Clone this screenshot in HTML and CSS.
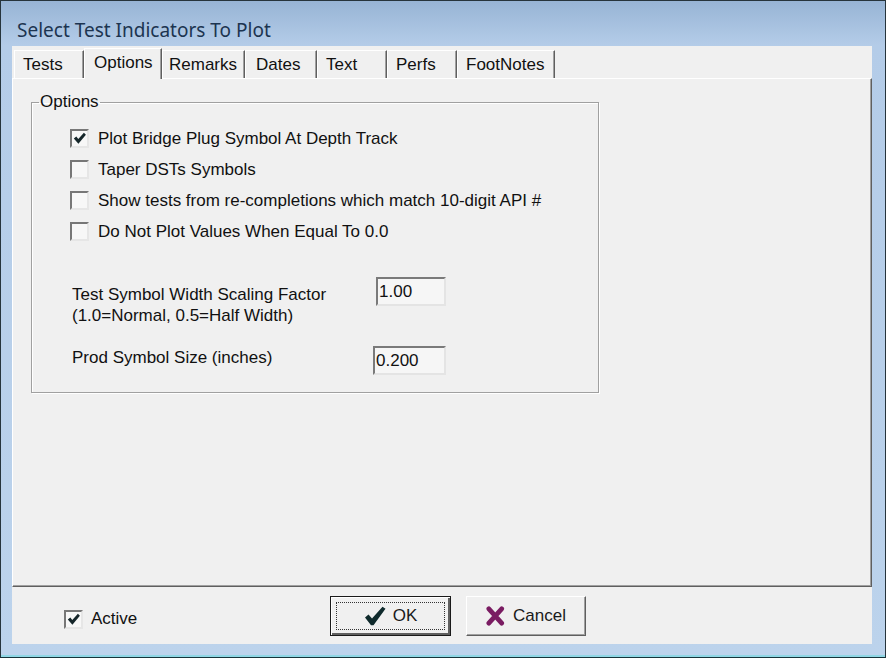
FILE: index.html
```html
<!DOCTYPE html>
<html lang="en">
<head>
    <meta charset="UTF-8">
    <title>Select Test Indicators To Plot</title>
    <link rel="stylesheet" href="styles.css">
</head>
<body>
    <div class="window">
        <div class="titlebar">Select Test Indicators To Plot</div>

        <div class="client">
            <!-- tab strip -->
            <div class="tabs">
                <div class="tab">Tests</div>
                <div class="tab active">Options</div>
                <div class="tab">Remarks</div>
                <div class="tab">Dates</div>
                <div class="tab">Text</div>
                <div class="tab">Perfs</div>
                <div class="tab">FootNotes</div>
            </div>

            <div class="panel">
                <fieldset class="group">
                    <legend>Options</legend>
                    <div class="group-body">
                        <div class="check-row">
                            <span class="box checked">
                                <svg viewBox="0 0 15 15" width="15" height="15"><path d="M1.8 7.6 L4.3 5.4 L6.3 8.1 L11.9 1.8 L13.9 3.7 L6.4 12.8 Z" fill="#15262a"/></svg>
                            </span>
                            Plot Bridge Plug Symbol At Depth Track
                        </div>
                        <div class="check-row"><span class="box"></span>Taper DSTs Symbols</div>
                        <div class="check-row"><span class="box"></span>Show tests from re-completions which match 10-digit API #</div>
                        <div class="check-row"><span class="box"></span>Do Not Plot Values When Equal To 0.0</div>

                        <div class="field-row first">
                            <div class="field-label">Test Symbol Width Scaling Factor<br>(1.0=Normal, 0.5=Half Width)</div>
                            <div class="textbox">1.00</div>
                        </div>
                        <div class="field-row second">
                            <div class="field-label">Prod Symbol Size (inches)</div>
                            <div class="textbox">0.200</div>
                        </div>
                    </div>
                </fieldset>
            </div>

            <!-- bottom bar -->
            <div class="footer">
                <div class="active-check">
                    <span class="box checked">
                        <svg viewBox="0 0 15 15" width="15" height="15"><path d="M1.8 7.6 L4.3 5.4 L6.3 8.1 L11.9 1.8 L13.9 3.7 L6.4 12.8 Z" fill="#15262a"/></svg>
                    </span>
                    Active
                </div>
                <div class="buttons">
                    <div class="btn default">
                        <span class="focus">
                            <svg viewBox="0 0 22 20" width="22" height="20"><path d="M1 11.5 L4.5 8.5 L8 12.5 L18.5 0.8 L21.5 2.8 L9.5 19.2 L7 19.2 Z" fill="#0f2a2c"/></svg>
                            OK
                        </span>
                    </div>
                    <div class="btn">
                        <svg viewBox="0 0 20 20" width="19" height="20"><path d="M3 2.5 L16.5 17.5 M16.5 2.5 L3 17.5" stroke="#7a1c62" stroke-width="5" stroke-linecap="round"/></svg>
                        Cancel
                    </div>
                </div>
            </div>
        </div>
    </div>
</body>
</html>
```

FILE: styles.css
```css
html, body {
    margin: 0;
    padding: 0;
}

body {
    background: #1e2b32;
    font-family: "Liberation Sans", Arial, sans-serif;
    font-size: 17px;
    color: #111;
}

.window {
    box-sizing: border-box;
    width: 886px;
    height: 658px;
    border: 1px solid #26343c;
    border-bottom-color: #16333a;
    padding: 0 13px 13px 11px;
    background: linear-gradient(#97b4d5 0px, #b4cce8 44px, #bcd3ec 100%);
    box-shadow: inset 0 -2px 0 #8fd6e4;
}

.titlebar {
    height: 45px;
    box-sizing: border-box;
    padding: 17px 0 0 5px;
    line-height: 24px;
    font-family: "Noto Sans", "Open Sans", sans-serif;
    font-size: 19px;
    color: #1c3450;
}

.client {
    height: 598px;
    background: #f0f0f0;
    display: flex;
    flex-direction: column;
}

/* tabs */

.tabs {
    height: 32px;
    display: flex;
    align-items: flex-end;
    padding-left: 2px;
    position: relative;
    z-index: 1;
}

.tab {
    box-sizing: border-box;
    height: 28px;
    line-height: 27px;
    padding-left: 8px;
    border-top: 1px solid #ffffff;
    border-left: 1px solid #ffffff;
    border-right: 1px solid #5f5f5f;
    box-shadow: inset -1px 0 0 #a0a0a0;
    white-space: nowrap;
}

.tab:nth-child(1) { width: 70px; }
.tab:nth-child(2) { width: 78px; }
.tab:nth-child(3) { width: 83px; padding-left: 6px; }
.tab:nth-child(4) { width: 72px; padding-left: 10px; }
.tab:nth-child(5) { width: 70px; }
.tab:nth-child(6) { width: 70px; }
.tab:nth-child(7) { width: 98px; }

.tab.active {
    height: 31px;
    margin-bottom: -1px;
    padding-left: 9px;
    line-height: 27px;
    background: #f0f0f0;
}

.panel {
    box-sizing: border-box;
    height: 509px;
    border-top: 1px solid #ffffff;
    border-left: 1px solid #ffffff;
    border-right: 1px solid #5f5f5f;
    border-bottom: 1px solid #5f5f5f;
    box-shadow: inset -1px -1px 0 #a0a0a0;
    padding: 13px 0 0 18px;
}

/* group box */

.group {
    box-sizing: border-box;
    width: 568px;
    height: 301px;
    margin: 0;
    padding: 0;
    border: 1px solid #a0a0a0;
    box-shadow: 1px 1px 0 #ffffff, inset 1px 1px 0 #ffffff;
}

.group legend {
    margin-left: 7px;
    padding: 0 1px;
    line-height: 20px;
}

.group-body {
    padding: 11px 0 0 38px;
}

.check-row {
    height: 31px;
    display: flex;
    align-items: center;
}

.box {
    box-sizing: border-box;
    width: 19px;
    height: 19px;
    flex: none;
    margin-right: 9px;
    background: #f7f7f7;
    border: 2px solid;
    border-color: #777777 #e6e6e6 #e6e6e6 #777777;
    display: flex;
    align-items: center;
    justify-content: center;
}

.field-row {
    display: flex;
    align-items: flex-start;
    padding-left: 2px;
}

.field-row.first {
    margin-top: 30px;
}

.field-row.second {
    margin-top: 20px;
}

.field-label {
    line-height: 21px;
    width: 304px;
}

.field-row.first .field-label {
    padding-top: 7px;
}

.field-row.second .field-label {
    width: 301px;
    padding-top: 1px;
}

.textbox {
    box-sizing: border-box;
    width: 70px;
    height: 29px;
    padding: 2px 0 0 1px;
    line-height: 22px;
    background: #f6f6f6;
    border: 2px solid;
    border-color: #7a7a7a #e4e4e4 #e4e4e4 #7a7a7a;
}

.field-row.second .textbox {
    width: 73px;
}

/* bottom bar */

.footer {
    flex: 1;
    display: flex;
    align-items: flex-start;
    padding-left: 52px;
}

.active-check {
    width: 266px;
    margin-top: 22px;
    display: flex;
    align-items: center;
}

.active-check .box {
    margin-right: 8px;
}

.buttons {
    display: flex;
    gap: 15px;
    margin-top: 9px;
}

.btn {
    box-sizing: border-box;
    width: 120px;
    height: 40px;
    display: flex;
    align-items: center;
    justify-content: center;
    gap: 8px;
    background: #f0f0f0;
    border: 1px solid;
    border-color: #ffffff #5f5f5f #5f5f5f #ffffff;
    box-shadow: inset -1px -1px 0 #a0a0a0;
    color: #1a1a1a;
}

.btn.default {
    width: 121px;
    border: 1px solid #1a1a1a;
    box-shadow: inset 1px 1px 0 #ffffff, inset -2px -2px 0 #5f5f5f;
    padding: 5px;
}

.btn.default .focus {
    flex: 1;
    align-self: stretch;
    display: flex;
    align-items: center;
    justify-content: center;
    gap: 7px;
    border: 1px dotted #333333;
}
```
